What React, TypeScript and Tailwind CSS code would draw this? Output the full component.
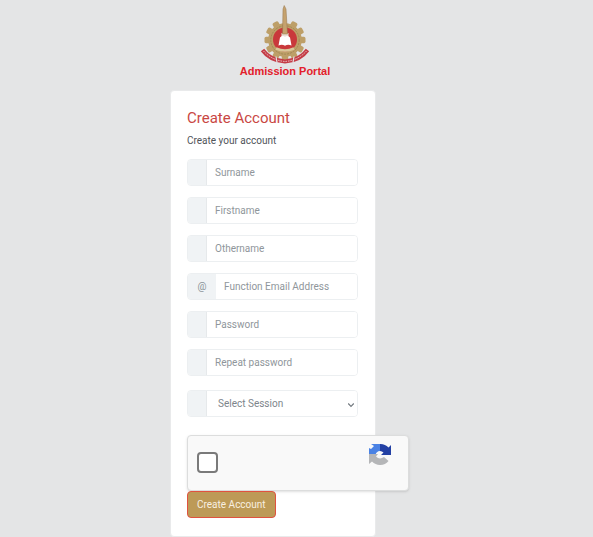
import React, { useState } from 'react';

interface FieldProps {
  id: string;
  label: string;
  type?: string;
  icon?: string;
}

const teeth = [30, 60, 90, 120, 150, 180, 210, 240, 270, 300, 330];

function Crest() {
  return (
    <svg viewBox="0 0 52 62" className="h-[62px] w-[52px]" aria-hidden="true">
      <g fill="#bd9f68">
        {teeth.map((angle) => (
          <rect key={angle} x="22.8" y="15.5" width="6.4" height="7" rx="1.6" transform={`rotate(${angle} 26 36)`} />
        ))}
        <circle cx="26" cy="36" r="16.8" />
      </g>
      <circle cx="26" cy="36" r="14.2" fill="none" stroke="#9c8050" strokeWidth="0.8" strokeDasharray="2 1" />
      <circle cx="26" cy="35.5" r="12" fill="#c9383b" />
      <path d="M22.5 29h7v5h-7z" fill="#e9dfd4" />
      <path d="M21 33.5q2.5-2.5 5-.8q2.5-1.7 5 .8l1.5 8q-3.5-1.6-6.500.2q-3-1.800-6.500-.2z" fill="#fff" />
      <path d="M17 44.5q9 4 18 0" fill="none" stroke="#d9c79a" strokeWidth="2.5" />
      <path d="M23.500 30L24 5L25.200 1.500L27 5L28.500 30z" fill="#c5a26e" stroke="#94754a" strokeWidth="0.5" />
      <path d="M3.500 46Q11 56.500 26 57.500Q41 56.500 48.500 46" fill="none" stroke="#c43d47" strokeWidth="4.2" />
      <path d="M4.500 47Q13 56.500 26 57.500Q39 56.500 47.500 47" fill="none" stroke="#edc9c9" strokeWidth="1" strokeDasharray="1.5 1" />
      <path d="M17 52.500l1 6M35 52.500l-1 6" stroke="#e4e5e6" strokeWidth="1.2" />
    </svg>
  );
}

function CaptchaLogo() {
  return (
    <svg viewBox="0 0 24 24" className="h-6 w-6" aria-hidden="true">
      <path d="M1 12V5L3 6L6 3L3 1H12V8A5 5 0 0 0 7.500 12z" fill="#4a82e4" />
      <path d="M12 1A11 11 0 0 1 20.500 4.500L23 2V12H13L15.500 9.500A5 5 0 0 0 12 8z" fill="#2340a4" />
      <path d="M1 11H10L8 13.500Q11.500 17 16 14L20.500 18A11 11 0 0 1 4 18.500L1 21z" fill="#b5b6b8" />
    </svg>
  );
}

function Field({ id, label, type = 'text', icon }: FieldProps) {
  const [value, setValue] = useState('');

  return (
    <div className="flex h-[27px] overflow-hidden rounded-sm border border-[#eceff1]">
      <label
        htmlFor={id}
        className={
          icon
            ? 'flex w-7 shrink-0 items-center justify-center bg-[#f0f3f5] text-[10px] text-[#8b9398]'
            : 'w-[19px] shrink-0 border-r border-[#e6e9eb] bg-[#f0f3f5]'
        }
      >
        {icon}
      </label>
      <input
        id={id}
        type={type}
        aria-label={label}
        value={value}
        onChange={(e) => setValue(e.target.value)}
        placeholder={label}
        className="h-full w-full min-w-0 bg-white px-2 text-[10px] text-[#5c6873] outline-none placeholder:text-[#8f969b]"
      />
    </div>
  );
}

export default function App() {
  const [session, setSession] = useState('');

  const handleSubmit = (e: React.FormEvent) => {
    e.preventDefault();
  };

  return (
    <div className="min-h-screen bg-[#e4e5e6] pr-[47px] font-['Roboto',sans-serif] text-[#4f5459]">
      <header className="flex flex-col items-center pt-1 pl-6">
        <Crest />
        <p className="-mt-0.5 font-['Liberation_Sans',sans-serif] text-[11px] leading-[14px] font-bold text-[#e3202b]">
          Admission Portal
        </p>
      </header>

      <main className="mx-auto mt-3 w-[206px] rounded-sm border border-[#e9eaeb] bg-white pt-[17px] pr-[17px] pb-[18px] pl-4">
        <form onSubmit={handleSubmit}>
          <h1 className="text-[15px] leading-5 text-[#c94743]">Create Account</h1>
          <p className="mt-1 text-[10px] leading-[17px]">Create your account</p>

          <div className="mt-[10px] flex flex-col gap-[11px]">
            <Field id="surname" label="Surname" />
            <Field id="firstname" label="Firstname" />
            <Field id="othername" label="Othername" />
            <Field id="email" label="Function Email Address" type="email" icon="@" />
            <Field id="password" label="Password" type="password" />
            <Field id="repeat" label="Repeat password" type="password" />
          </div>

          <div className="relative mt-[14px] flex h-[27px] overflow-hidden rounded-sm border border-[#eceff1]">
            <label htmlFor="session" className="w-[19px] shrink-0 border-r border-[#e6e9eb] bg-[#f0f3f5]" />
            <select
              id="session"
              aria-label="Session"
              value={session}
              onChange={(e) => setSession(e.target.value)}
              className="w-full appearance-none bg-white px-[11px] text-[10px] text-[#7d858b] outline-none"
            >
              <option value="">Select Session</option>
            </select>
            <svg viewBox="0 0 8 8" className="pointer-events-none absolute top-[10px] right-0.5 h-2 w-2" aria-hidden="true">
              <path d="M1.200 2.500L4 5.300L6.800 2.500" fill="none" stroke="#737a80" strokeWidth="1.2" />
            </svg>
          </div>

          <div className="mt-[18px] flex h-14 w-[222px] items-start justify-between rounded-sm border border-[#dcdddd] bg-[#f9f9f9] pr-4 pl-[9px] shadow-sm">
            <input
              type="checkbox"
              aria-label="Captcha"
              className="mt-4 h-[21px] w-[21px] appearance-none rounded-sm border-2 border-[#7a7a7a] bg-white checked:bg-[#4a90e2]"
            />
            <div className="mt-[7px]">
              <CaptchaLogo />
            </div>
          </div>

          <button
            type="submit"
            className="block h-[27px] rounded-sm border border-[#e0523f] bg-[#bd9a57] px-[9px] text-[10px] text-[#f8efe0]"
          >
            Create Account
          </button>
        </form>
      </main>
    </div>
  );
}
